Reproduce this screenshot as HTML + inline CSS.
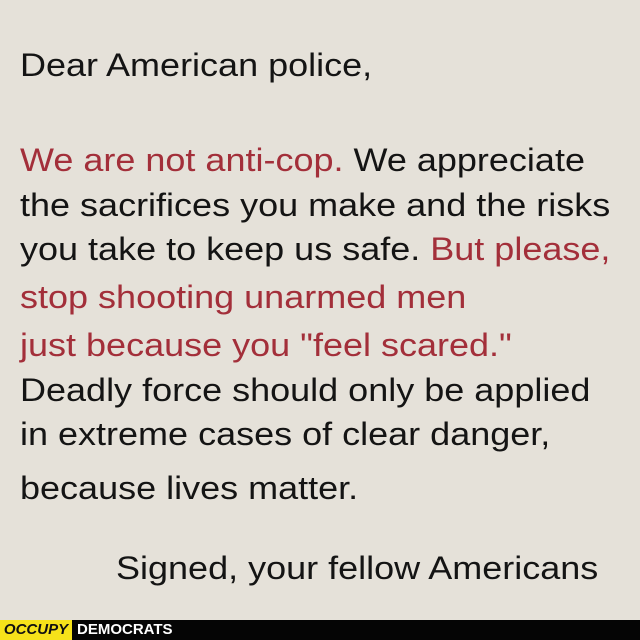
<!DOCTYPE html>
<html><head><style>
html,body{margin:0;padding:0}
body{width:640px;height:640px;background:#e5e1d9;position:relative;overflow:hidden;font-family:"Liberation Sans",sans-serif;color:#141414}
.l{position:absolute;left:20px;font-size:32px;white-space:nowrap;line-height:40px;transform:scaleX(1.125);transform-origin:0 0}
.r{color:#a32f3a}
.bar{position:absolute;left:0;top:620px;width:640px;height:20px;background:#050505}
.y{position:absolute;left:0;top:0;width:72px;height:20px;background:#f6e21a;color:#111;font-weight:bold;font-style:italic;font-size:15px;line-height:20px;text-align:center}
.d{position:absolute;left:77px;top:0;color:#fff;font-weight:bold;font-size:15px;line-height:20px}
</style></head><body>
<div class="l" style="top:45px">Dear American police,</div>
<div class="l" style="top:140px"><span class="r">We are not anti-cop.</span> We appreciate</div>
<div class="l" style="top:185px">the sacrifices you make and the risks</div>
<div class="l" style="top:229px">you take to keep us safe. <span class="r">But please,</span></div>
<div class="l r" style="top:277px">stop shooting unarmed men</div>
<div class="l" style="top:325px"><span class="r">just because you "feel scared."</span></div>
<div class="l" style="top:370px">Deadly force should only be applied</div>
<div class="l" style="top:414px">in extreme cases of clear danger,</div>
<div class="l" style="top:468px">because lives matter.</div>
<div class="l" style="top:548px;left:116px">Signed, your fellow Americans</div>
<div class="bar"><div class="y">OCCUPY</div><div class="d">DEMOCRATS</div></div>
</body></html>
